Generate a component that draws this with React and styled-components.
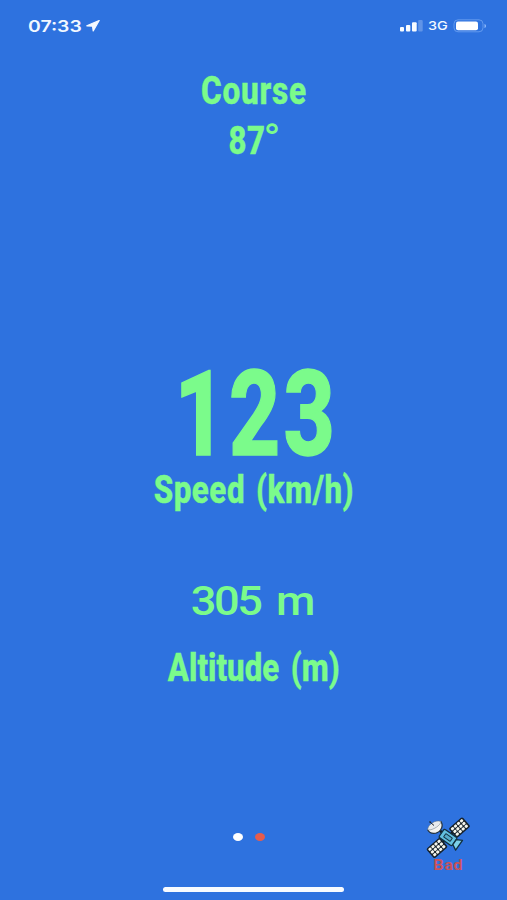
import React from "react";
import styled, { createGlobalStyle } from "styled-components";

const Global = createGlobalStyle`
  * { box-sizing: border-box; }
  body { margin: 0; background: #2e72df; }
`;

const Screen = styled.main`
  width: 507px;
  height: 900px;
  overflow: hidden;
  display: flex;
  flex-direction: column;
  background: #2e72df;
  color: #7bfb8b;
  font-family: Roboto, "Liberation Sans", sans-serif;
`;

const StatusBar = styled.header`
  height: 52px;
  padding: 0 20px 0 28px;
  display: flex;
  align-items: center;
  justify-content: space-between;
  color: #f2f8ff;
  font-family: Inter, sans-serif;
`;

const StatusGroup = styled.div`
  display: flex;
  align-items: center;
  gap: ${(p) => p.$gap}px;
`;

const Clock = styled.span`
  width: 55px;
  font-size: 16px;
  font-weight: 600;
  line-height: 20px;
  white-space: nowrap;
  transform: scaleX(1.21);
  transform-origin: left;
`;

const Network = styled.span`
  width: 20px;
  font-size: 12px;
  font-weight: 500;
  line-height: 16px;
  transform: scaleX(1.2);
  transform-origin: left;
`;

const Reading = styled.section`
  display: flex;
  flex-direction: column;
  align-items: center;
  margin-top: ${(p) => p.$top}px;
`;

const Line = styled.div`
  height: ${(p) => p.$height}px;
  line-height: ${(p) => p.$height}px;
  font-size: ${(p) => p.$size || 39.5}px;
  font-weight: ${(p) => p.$weight || 800};
  letter-spacing: ${(p) => p.$spacing || 0}px;
  word-spacing: ${(p) => p.$word || 0}px;
  padding-left: ${(p) => p.$indent || 0}px;
  padding-right: ${(p) => p.$outdent || 0}px;
  -webkit-text-stroke: ${(p) => p.$stroke || 0}px currentColor;
  white-space: pre;
  transform: scaleX(${(p) => p.$stretch});
`;

const Degree = styled.span`
  display: inline-block;
  width: 15px;
  margin-left: -3px;
  line-height: 1;
  font-size: 42px;
  font-weight: 400;
  -webkit-text-stroke: 0;
  transform: scaleX(1.4);
  transform-origin: left;
`;

const Footer = styled.footer`
  height: 90px;
  margin-top: auto;
  display: grid;
  grid-template-columns: 1fr 180px 1fr;
`;

const Center = styled.div`
  grid-column: 2;
  display: flex;
  flex-direction: column;
  align-items: center;
  justify-content: space-between;
  padding: 23px 0 8px;
`;

const Dots = styled.div`
  display: flex;
  gap: 12px;
  margin-right: 10px;
`;

const Dot = styled.span`
  width: 10px;
  height: 8px;
  border-radius: 50%;
  background: ${(p) => p.$color};
`;

const HomeBar = styled.div`
  width: 181px;
  height: 5px;
  border-radius: 3px;
  background: #f8fbff;
`;

const Signal = styled.div`
  display: flex;
  flex-direction: column;
  align-items: center;
  width: 46px;
  margin: 7px 0 0 81px;
`;

const Quality = styled.span`
  color: #c9525b;
  font-size: 14.5px;
  font-weight: 700;
  line-height: 14px;
  letter-spacing: 0.3px;
  padding-left: 1px;
  transform: scaleX(1.13);
`;

function SignalBars() {
  return (
    <svg width="23" height="12" viewBox="0 0 23 12" fill="#f7fbff">
      <rect x="0" y="7" width="4" height="4.5" rx="1" />
      <rect x="6" y="5" width="4.3" height="6.5" rx="1" />
      <rect x="12" y="2.3" width="4.7" height="9.2" rx="1" />
      <rect x="18.2" y="0" width="4.5" height="11.5" rx="1" opacity=".25" />
    </svg>
  );
}

function Battery() {
  return (
    <svg width="34" height="14" viewBox="0 0 34 14">
      <rect x="1" y=".8" width="29" height="12" rx="4" fill="none" stroke="#8db9fa" strokeOpacity=".55" />
      <rect x="3" y="2.5" width="22" height="8.8" rx="2" fill="#fff" />
      <path d="M31.5 5c2 .5 2 3.5 0 4z" fill="#8db9fa" />
    </svg>
  );
}

function LocationArrow() {
  return (
    <svg width="14" height="12" viewBox="0 0 14 12">
      <path d="M13.2 .5 .8 5.8 6.5 6.2 7.2 11z" fill="#f4f9ff" stroke="#f4f9ff" strokeWidth="1.2" strokeLinejoin="round" />
    </svg>
  );
}

const PANEL_COLUMNS = [-7.6, -3.7, 0.3, 4.3];
const PANEL_ROWS = [-5.1, -1.5, 2.1];

function SolarPanel({ x, y }) {
  return (
    <g transform={`translate(${x} ${y}) rotate(-41)`}>
      <rect x="-9" y="-6.4" width="18" height="12.8" rx="1.8" fill="#17222b" />
      {PANEL_ROWS.map((row) =>
        PANEL_COLUMNS.map((column) => (
          <rect key={`${column}:${row}`} x={column} y={row} width="3.2" height="2.8" rx="1" fill="#f5f6ee" />
        ))
      )}
    </g>
  );
}

function Satellite() {
  return (
    <svg width="46" height="42" viewBox="0 0 46 42">
      <path d="M15 28 19 24M26 17 30 13M13 12 20 18" stroke="#101923" strokeWidth="2.5" />
      <SolarPanel x={34.5} y={10.5} />
      <SolarPanel x={12} y={31} />
      <g transform="translate(23 20.5) rotate(35)">
        <rect x="-8" y="-5" width="16" height="10" rx="1.5" fill="#62bfdf" stroke="#12303f" strokeWidth="1.3" />
        <rect x="-4" y="-2" width="8" height="4" rx=".5" fill="#55abc9" stroke="#12303f" />
        <path d="M8-3 13.5-6V6L8 3z" fill="#7bd0e9" stroke="#12303f" strokeWidth="1.3" strokeLinejoin="round" />
      </g>
      <path d="M2.8 13C5 17.5 12 17.5 15.5 13Q18.5 9 16 4.5z" fill="#f4f4f1" stroke="#23313c" strokeWidth="1.2" strokeLinejoin="round" />
      <path d="M2.8 13C2 8 11 2 16 4.5C16 8 8 13.5 2.8 13z" fill="#e8ebed" stroke="#60717d" strokeWidth=".5" />
      <path d="M9 8.5 5 5" stroke="#17222b" strokeWidth="1" />
      <circle cx="5" cy="5" r=".8" fill="#17222b" />
    </svg>
  );
}

export default function App() {
  return (
    <>
      <Global />
      <Screen>
        <StatusBar>
          <StatusGroup $gap={3}>
            <Clock>07:33</Clock>
            <LocationArrow />
          </StatusGroup>
          <StatusGroup $gap={5}>
            <SignalBars />
            <Network>3G</Network>
            <Battery />
          </StatusGroup>
        </StatusBar>
        <Reading $top={14}>
          <Line $height={50} $stretch={0.8} $spacing={0.9} $indent={1} $stroke={0.4}>Course</Line>
          <Line $height={50} $stretch={0.79} $spacing={0.6} $outdent={4} $stroke={0.4}>87<Degree>°</Degree></Line>
        </Reading>
        <Reading $top={196}>
          <Line $height={107} $size={118} $stretch={0.755} $spacing={4} $indent={7} $stroke={1.4}>123</Line>
          <Line $height={42} $stretch={0.795} $spacing={0.6} $word={3.5} $indent={1} $stroke={0.4}>Speed (km/h)</Line>
        </Reading>
        <Reading $top={69}>
          <Line $height={44} $size={40} $weight={500} $stretch={1.13} $spacing={-2.2} $word={6} $outdent={3}>305 m</Line>
          <Line $height={88} $stretch={0.79} $word={5} $stroke={0.4}>Altitude (m)</Line>
        </Reading>
        <Footer>
          <Center>
            <Dots>
              <Dot $color="#fff" />
              <Dot $color="#e75c4c" />
            </Dots>
            <HomeBar />
          </Center>
          <Signal>
            <Satellite />
            <Quality>Bad</Quality>
          </Signal>
        </Footer>
      </Screen>
    </>
  );
}
